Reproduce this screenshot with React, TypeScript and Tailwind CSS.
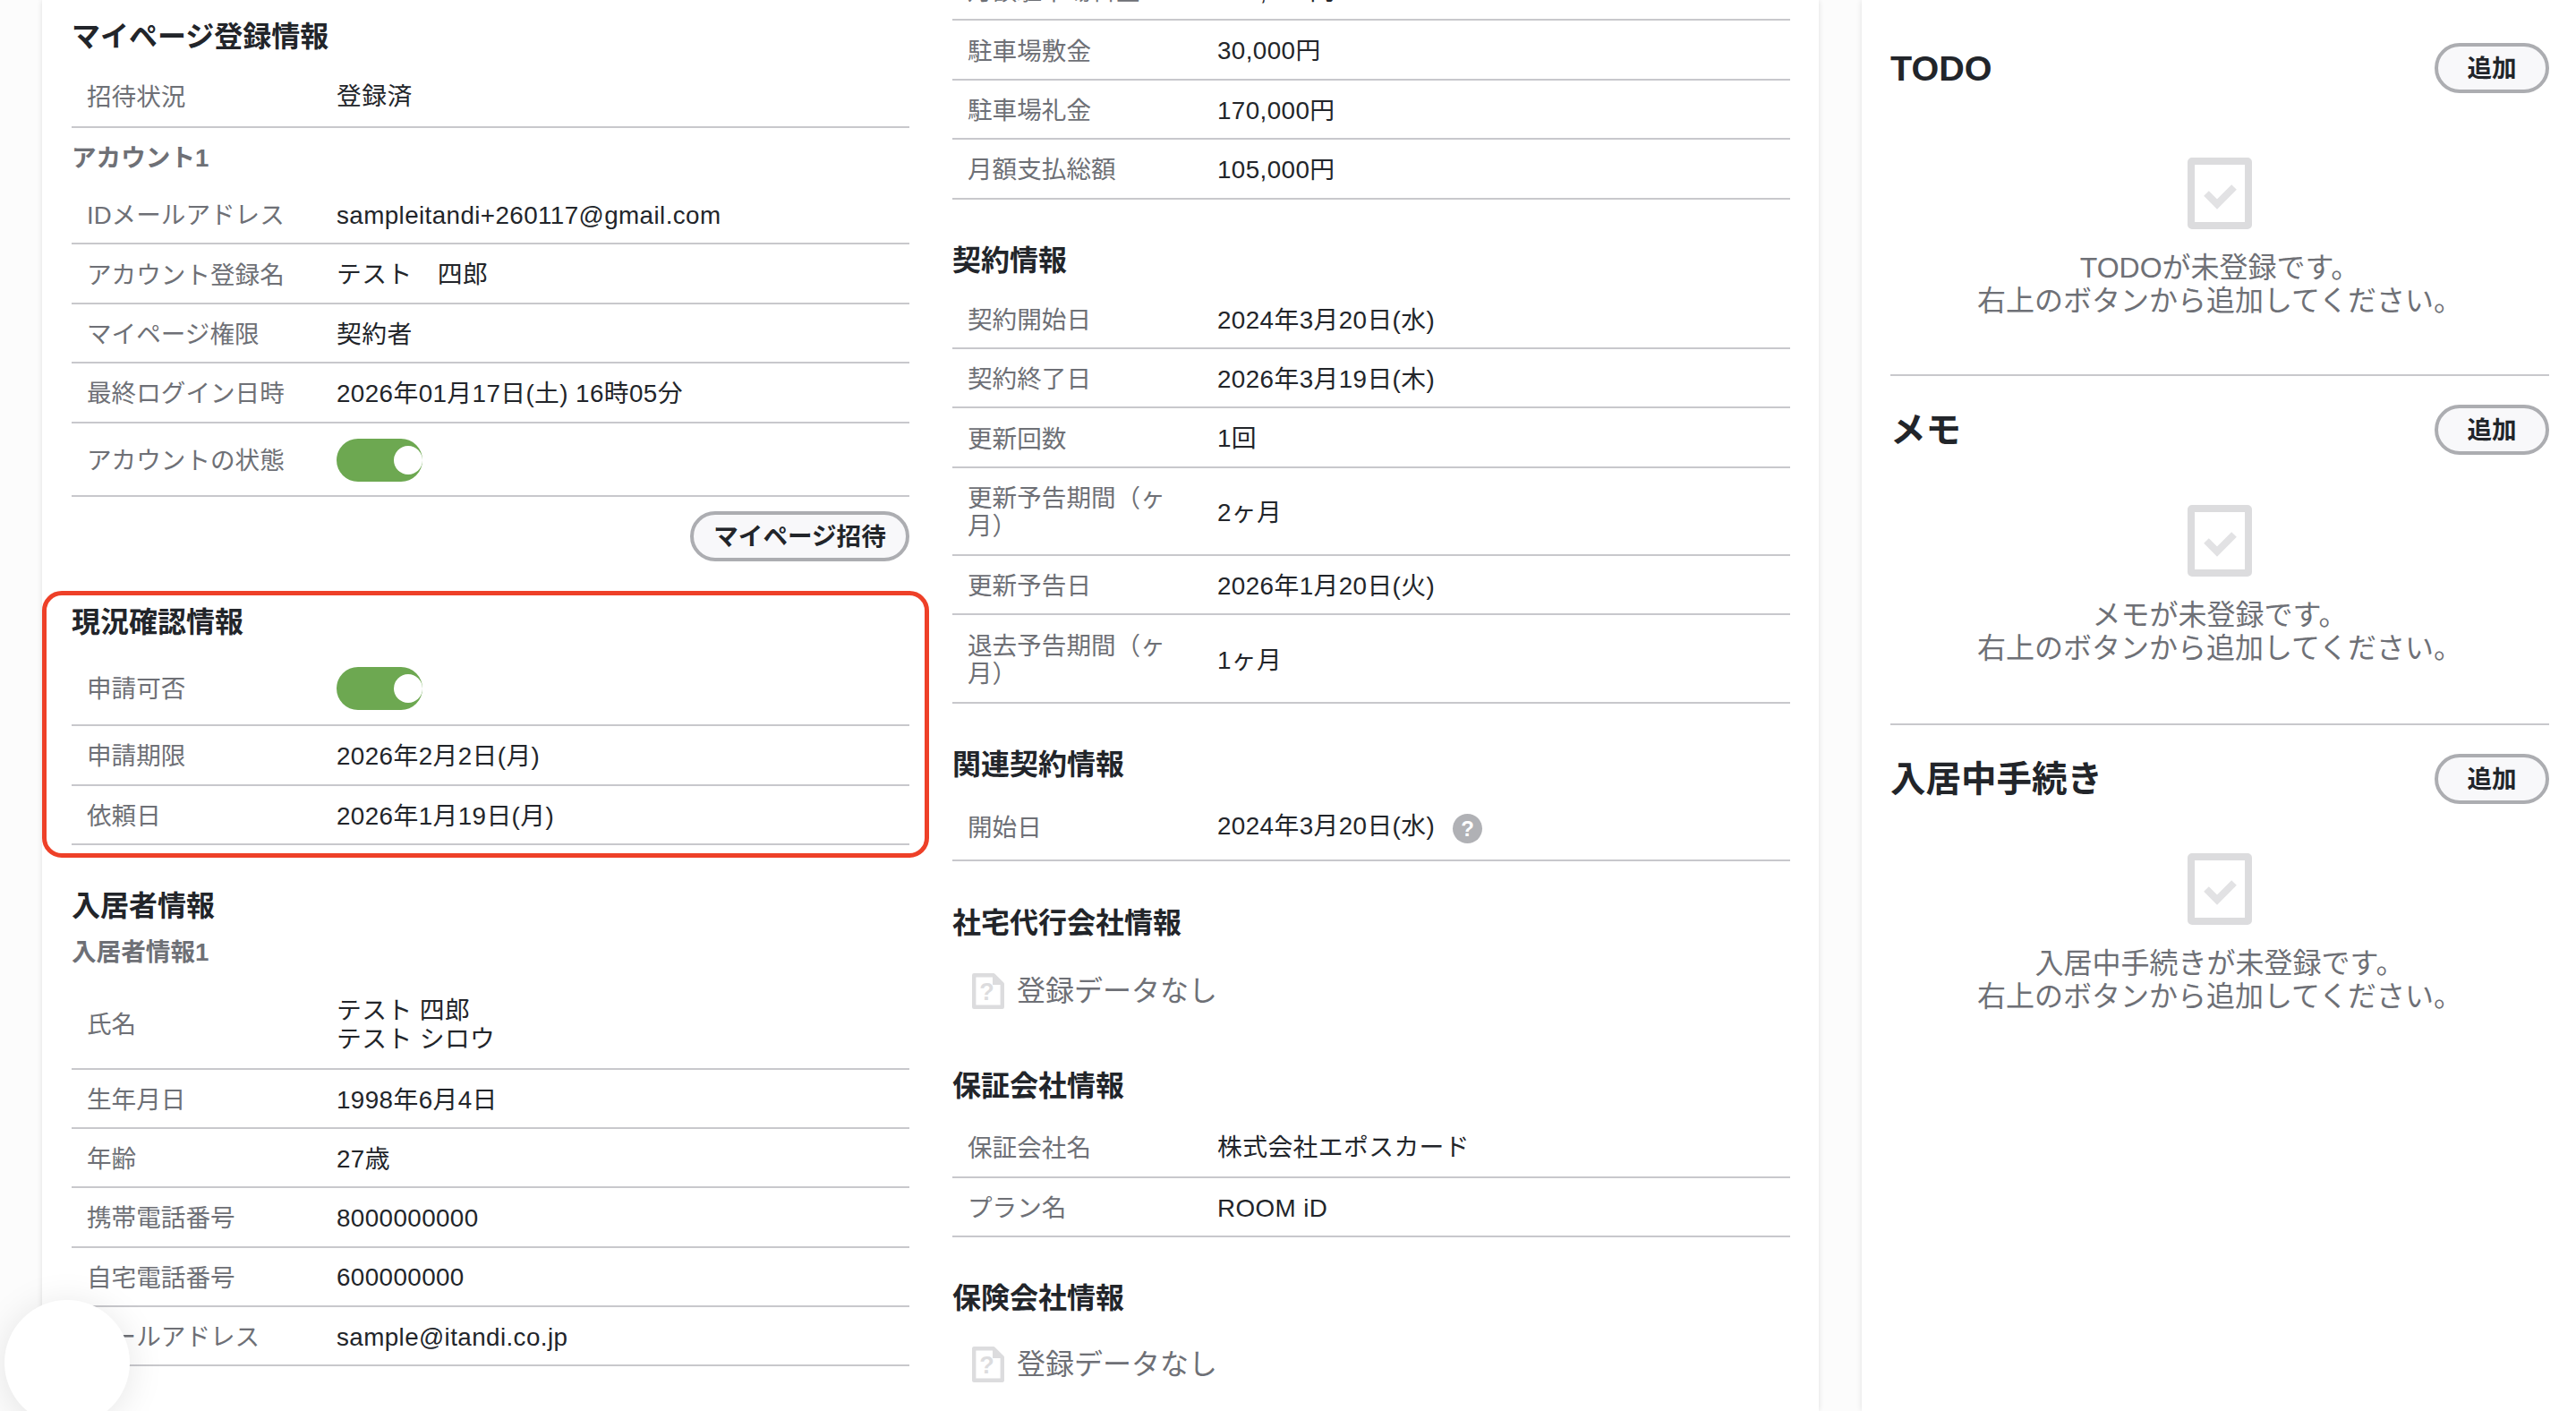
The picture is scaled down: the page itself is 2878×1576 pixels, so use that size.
const font = "font-['Liberation_Sans','Noto_Sans_CJK_JP',sans-serif]";

function Row({ label, children, h = "h-[66.4px]", extra = "pt-[3px]" }: { label: React.ReactNode; children: React.ReactNode; h?: string; extra?: string }) {
  return (
    <div className={`flex items-center border-b-2 border-[#c8c8cc] box-border ${h} ${extra}`}>
      <div className="w-[296px] pl-[17px] pr-[48px] text-[#6e7076] leading-[31px] shrink-0">{label}</div>
      <div className="flex-1 text-[#22252a] leading-[31.5px] text-[27.8px] tracking-[0.4px]">{children}</div>
    </div>
  );
}

function Toggle() {
  return (
    <div className="w-[96px] h-[48px] rounded-full bg-[#6da851] flex items-center justify-end">
      <div className="w-[32px] h-[32px] rounded-full bg-white" />
    </div>
  );
}

function Heading({ children, className = "" }: { children: React.ReactNode; className?: string }) {
  return <h2 className={`text-[32px] leading-[40px] font-bold text-[#22252a] ${className}`}>{children}</h2>;
}

function Sub({ children, className = "" }: { children: React.ReactNode; className?: string }) {
  return <h3 className={`text-[27.6px] leading-[36px] font-bold text-[#6e7076] ${className}`}>{children}</h3>;
}

function NoData({ className = "" }: { className?: string }) {
  return (
    <div className={`flex items-center pl-[22px] gap-[14px] ${className}`}>
      <svg width="36" height="40" viewBox="0 0 36 40" className="shrink-0">
        <path d="M2.2 2.2H24L33.8 12V37.8H2.2Z" fill="#fff" stroke="#dcdcde" strokeWidth="4.4" strokeLinejoin="round" />
        <path d="M23 3V13H33Z" fill="#dcdcde" />
        <text x="16.5" y="30" textAnchor="middle" fontSize="27" fontWeight="700" fill="#dcdcde" fontFamily="'Liberation Sans',sans-serif">?</text>
      </svg>
      <span className="text-[32px] leading-[40px] text-[#6e7076]">登録データなし</span>
    </div>
  );
}

function EmptyIcon() {
  return (
    <svg width="72" height="80" viewBox="0 0 72 80">
      <rect x="4" y="4" width="64" height="72" rx="1" fill="none" stroke="#dcdcde" strokeWidth="8" />
      <path d="M21 40L33 52L52 33" fill="none" stroke="#e2e2e4" strokeWidth="8" />
    </svg>
  );
}

function SideSection({ title, name, iconGap, className }: { title: string; name: string; iconGap: string; className: string }) {
  return (
    <section className={`box-border ${className}`}>
      <div className="flex items-center justify-between h-[56px]">
        <h2 className="text-[39.5px] font-bold leading-[48px] text-[#22252a]">{title}</h2>
        <button className="w-[128px] h-[56px] pt-[2px] rounded-full border-[4px] border-[#acadb1] bg-[#f8f8fa] text-[27.6px] font-bold text-[#22252a] leading-none">追加</button>
      </div>
      <div className={`flex flex-col items-center ${iconGap}`}>
        <EmptyIcon />
        <p className="mt-[24.5px] text-[32px] leading-[37px] text-[#6e7076] text-center">
          {name}が未登録です。
          <br />
          右上のボタンから追加してください。
        </p>
      </div>
    </section>
  );
}

export default function App() {
  return (
    <div className={`${font} relative flex h-[1576px] w-[2878px] overflow-hidden bg-[#fcfcfc] text-[27.6px]`}>
      <main className="ml-[47px] w-[1985px] shrink-0 bg-white shadow-[0_0_6px_rgba(0,0,0,0.12)] flex gap-[48px] px-[33px] h-full overflow-hidden">
        <div className="w-[936px] shrink-0 pt-[21px]">
          <Heading className="mb-[14px]">マイページ登録情報</Heading>
          <Row label="招待状況" h="h-[68px]" extra="">登録済</Row>
          <Sub className="mt-[15.5px] mb-[12.5px]">アカウント1</Sub>
          <Row label="IDメールアドレス">sampleitandi+260117@gmail.com</Row>
          <Row label="アカウント登録名">テスト　四郎</Row>
          <Row label="マイページ権限">契約者</Row>
          <Row label="最終ログイン日時">2026年01月17日(土) 16時05分</Row>
          <Row label="アカウントの状態" h="h-[82px]"><Toggle /></Row>
          <div className="flex justify-end mt-[16.4px]">
            <button className="w-[245px] h-[56px] pt-[2px] rounded-full border-[4px] border-[#acadb1] bg-[#f8f8fa] text-[27.6px] font-bold text-[#22252a] leading-none">マイページ招待</button>
          </div>

          <Heading className="mt-[48.5px] mb-[11.5px]">現況確認情報</Heading>
          <Row label="申請可否" h="h-[84px]"><Toggle /></Row>
          <Row label="申請期限" h="h-[67px]">2026年2月2日(月)</Row>
          <Row label="依頼日" h="h-[66px]">2026年1月19日(月)</Row>

          <Heading className="mt-[48.5px]">入居者情報</Heading>
          <Sub className="mt-[14px]">入居者情報1</Sub>
          <Row label="氏名" h="h-[112.5px]" extra="pt-[14px]">テスト 四郎<br />テスト シロウ</Row>
          <Row label="生年月日" h="h-[66.2px]">1998年6月4日</Row>
          <Row label="年齢" h="h-[66.2px]">27歳</Row>
          <Row label="携帯電話番号" h="h-[66.2px]">8000000000</Row>
          <Row label="自宅電話番号" h="h-[66.2px]">600000000</Row>
          <Row label="メールアドレス" h="h-[66.2px]">sample@itandi.co.jp</Row>
        </div>

        <div className="w-[936px] shrink-0 mt-[-43px]">
          <Row label="月額駐車場料金">100,000円</Row>
          <Row label="駐車場敷金">30,000円</Row>
          <Row label="駐車場礼金">170,000円</Row>
          <Row label="月額支払総額">105,000円</Row>

          <Heading className="mt-[48px] mb-[13px]">契約情報</Heading>
          <Row label="契約開始日">2024年3月20日(水)</Row>
          <Row label="契約終了日">2026年3月19日(木)</Row>
          <Row label="更新回数">1回</Row>
          <Row label="更新予告期間（ヶ月）" h="h-[98.3px]">2ヶ月</Row>
          <Row label="更新予告日">2026年1月20日(火)</Row>
          <Row label="退去予告期間（ヶ月）" h="h-[98.7px]">1ヶ月</Row>

          <Heading className="mt-[48px] mb-[13px]">関連契約情報</Heading>
          <Row label="開始日" h="h-[74.5px]">
            <span className="inline-flex items-center gap-[20px]">
              <span className="-mt-[6px]">2024年3月20日(水)</span>
              <span className="w-[33px] h-[33px] rounded-full bg-[#b0b1b5] text-white text-[24px] tracking-normal font-bold flex items-center justify-center leading-none">?</span>
            </span>
          </Row>

          <Heading className="mt-[49.5px]">社宅代行会社情報</Heading>
          <NoData className="mt-[36px]" />

          <Heading className="mt-[66px] mb-[14.6px]">保証会社情報</Heading>
          <Row label="保証会社名" h="h-[68px]">株式会社エポスカード</Row>
          <Row label="プラン名">ROOM iD</Row>

          <Heading className="mt-[48px]">保険会社情報</Heading>
          <NoData className="mt-[34.4px]" />
        </div>
      </main>

      <aside className="ml-[48px] flex-1 bg-white shadow-[0_0_6px_rgba(0,0,0,0.12)] pl-[32px] pr-[30px] pt-[48px] flex flex-col gap-[32px]">
        <SideSection title="TODO" name="TODO" iconGap="mt-[72px]" className="border-b-2 border-[#c8c8cc] pb-[63.5px]" />
        <SideSection title="メモ" name="メモ" iconGap="mt-[56px]" className="border-b-2 border-[#c8c8cc] pb-[65.5px]" />
        <SideSection title="入居中手続き" name="入居中手続き" iconGap="mt-[55px]" className="" />
      </aside>

      <div className="absolute left-[47px] top-[660px] w-[991px] h-[298px] rounded-[22px] border-[5px] border-[#ee4028] pointer-events-none" />
      <div className="absolute left-[5px] top-[1452px] w-[140px] h-[140px] rounded-full bg-white shadow-[0_4px_40px_rgba(0,0,0,0.1)]" />
    </div>
  );
}
